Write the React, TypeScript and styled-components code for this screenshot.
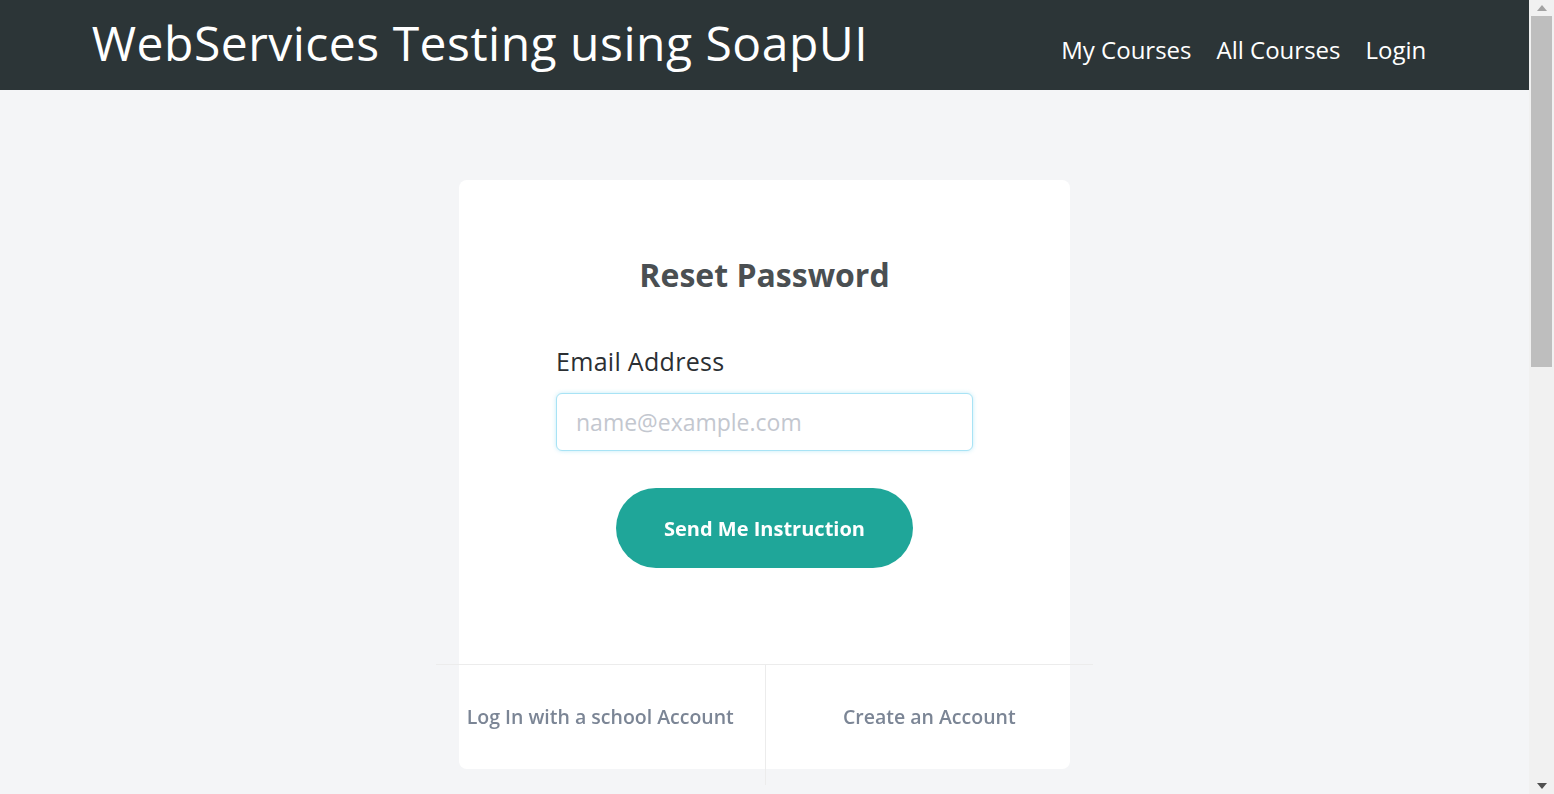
import React from 'react';
import styled, { createGlobalStyle } from 'styled-components';

const GlobalStyle = createGlobalStyle`
  html, body {
    margin: 0;
    padding: 0;
    background: #f4f5f7;
    font-family: "Open Sans", "Noto Sans", Arial, sans-serif;
  }
  * { box-sizing: border-box; }
`;

const Shell = styled.div`
  display: flex;
  height: 100vh;
  overflow: hidden;
`;

const Page = styled.div`
  flex: 1;
  min-width: 0;
  background: #f4f5f7;
`;

// browser scrollbar as seen in the screenshot
const ScrollBar = styled.div`
  width: 25px;
  flex-shrink: 0;
  background: #f1f1f1;
  display: flex;
  flex-direction: column;
  align-items: center;
  padding: 0 2px;
`;

const Arrow = styled.div<{ $down?: boolean }>`
  height: 16px;
  width: 100%;
  display: flex;
  align-items: center;
  justify-content: center;
  color: ${(p) => (p.$down ? '#505050' : '#a3a3a3')};
`;

const Thumb = styled.div`
  width: 100%;
  height: 351px;
  background: #bebebe;
`;

const Track = styled.div`
  flex: 1;
`;

const Header = styled.header`
  height: 90px;
  background: #2c3537;
  display: flex;
  align-items: center;
  justify-content: space-between;
  padding: 0 6%;
`;

const Title = styled.h1`
  margin: 0;
  margin-top: -6px;
  color: #fff;
  font-weight: 400;
  font-size: 48px;
  letter-spacing: 0.5px;
`;

const Nav = styled.nav`
  display: flex;
  align-items: center;
  gap: 25px;
  padding-right: 11px;
  margin-top: 9px;
`;

const NavLink = styled.a`
  color: #fff;
  font-size: 24px;
  text-decoration: none;
  cursor: pointer;
`;

const Main = styled.main`
  display: flex;
  justify-content: center;
  padding-top: 90px;
`;

const Card = styled.div`
  width: 611px;
  background: #fff;
  border-radius: 8px;
  display: flex;
  flex-direction: column;
  align-items: center;
`;

const Heading = styled.h2`
  margin: 73px 0 0;
  font-size: 32px;
  font-weight: 700;
  color: #4a4f52;
`;

const Field = styled.div`
  width: 417px;
  margin-top: 48px;
  display: flex;
  flex-direction: column;
`;

const Label = styled.label`
  font-size: 25px;
  letter-spacing: 0.3px;
  color: #2b2f33;
  margin-bottom: 15px;
`;

const Input = styled.input`
  height: 58px;
  width: 100%;
  border: 1px solid #a8e3f5;
  border-radius: 6px;
  box-shadow: 0 0 4px rgba(120, 210, 240, 0.45);
  padding: 0 19px;
  font-family: inherit;
  font-size: 23px;
  color: #333;
  caret-color: #222;
  outline: none;
  &::placeholder {
    color: #c3c7cf;
  }
`;

const SendButton = styled.button`
  margin-top: 37px;
  width: 297px;
  height: 80px;
  border: none;
  border-radius: 40px;
  background: #1fa699;
  color: #fff;
  font-family: inherit;
  font-size: 20px;
  font-weight: 700;
  cursor: pointer;
`;

const Footer = styled.div`
  margin-top: 96px;
  width: calc(100% + 46px);
  margin-bottom: -16px;
  border-top: 1px solid #ececec;
  display: grid;
  grid-template-columns: 1fr 1fr;
`;

const FooterLink = styled.a<{ $divider?: boolean }>`
  height: 120px;
  display: flex;
  align-items: center;
  justify-content: center;
  padding-bottom: 18px;
  font-size: 19.5px;
  font-weight: 600;
  color: #7b8595;
  cursor: pointer;
  border-left: ${(p) => (p.$divider ? '1px solid #ececec' : 'none')};
`;

export default function App() {
  return (
    <>
      <GlobalStyle />
      <Shell>
        <Page>
          <Header>
            <Title>WebServices Testing using SoapUI</Title>
            <Nav>
              <NavLink>My Courses</NavLink>
              <NavLink>All Courses</NavLink>
              <NavLink>Login</NavLink>
            </Nav>
          </Header>
          <Main>
            <Card>
              <Heading>Reset Password</Heading>
              <Field>
                <Label>Email Address</Label>
                <Input type="email" placeholder="name@example.com" autoFocus />
              </Field>
              <SendButton>Send Me Instruction</SendButton>
              <Footer>
                <FooterLink>Log In with a school Account</FooterLink>
                <FooterLink $divider>Create an Account</FooterLink>
              </Footer>
            </Card>
          </Main>
        </Page>
        <ScrollBar>
          <Arrow>
            <svg width="10" height="6" viewBox="0 0 10 6">
              <path d="M0 6 L5 0 L10 6 Z" fill="currentColor" />
            </svg>
          </Arrow>
          <Thumb />
          <Track />
          <Arrow $down>
            <svg width="10" height="6" viewBox="0 0 10 6">
              <path d="M0 0 L10 0 L5 6 Z" fill="currentColor" />
            </svg>
          </Arrow>
        </ScrollBar>
      </Shell>
    </>
  );
}
